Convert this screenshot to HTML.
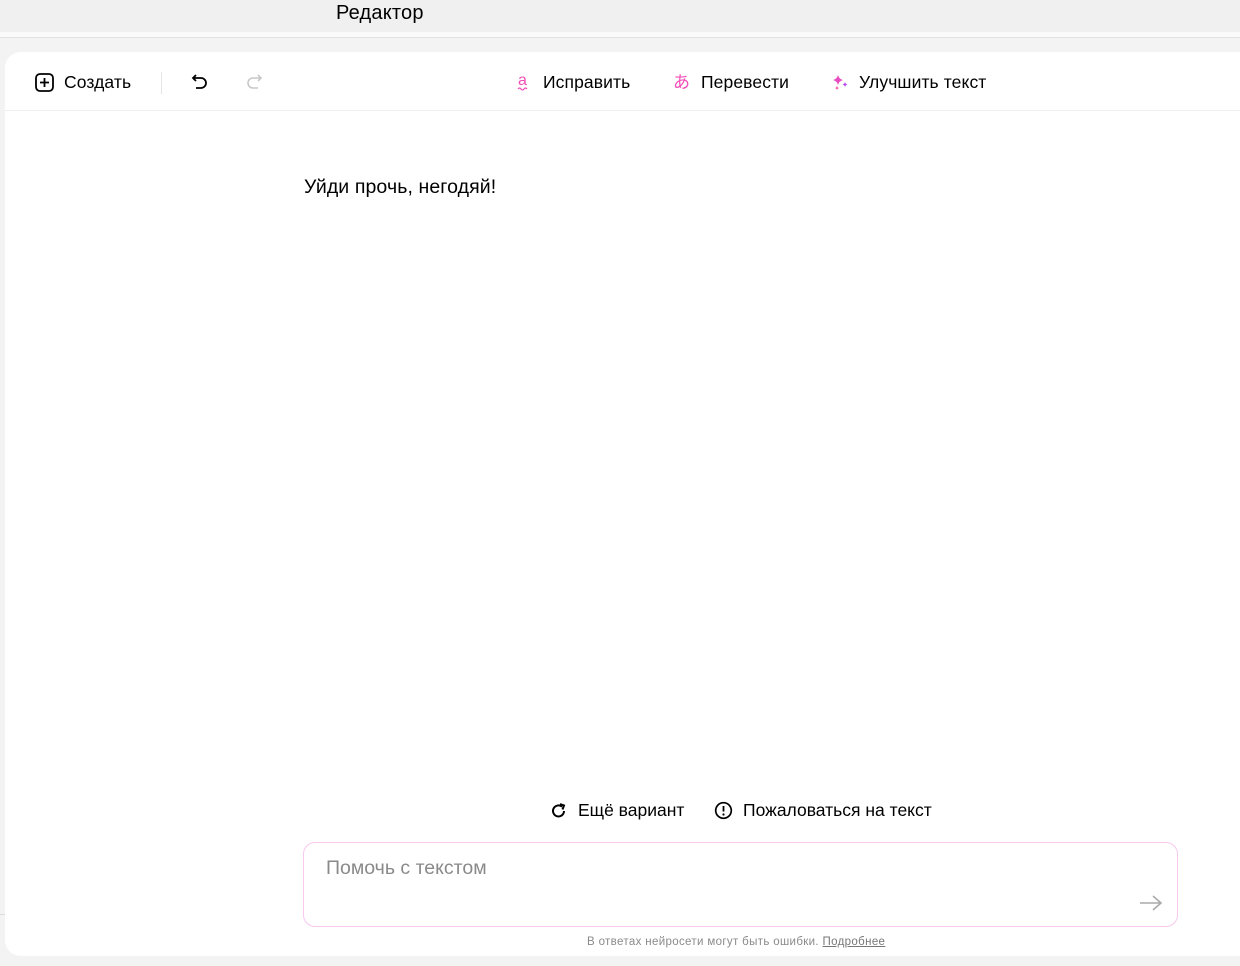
<!DOCTYPE html>
<html><head><meta charset="utf-8"><style>
*{margin:0;padding:0;box-sizing:border-box}
body{width:1240px;height:966px;background:#f3f3f3;font-family:"Liberation Sans","DejaVu Sans",sans-serif;position:relative;overflow:hidden;color:#000}
.top{position:absolute;left:0;top:0;width:1240px;height:32px;background:#f0f0f0}
.gap{position:absolute;left:0;top:32px;width:1240px;height:5px;background:#fafafa}
.top span{position:absolute;left:336px;top:2px;font-size:20px;letter-spacing:0.2px}
.line{position:absolute;left:0;top:37px;width:1240px;height:1px;background:#e2e2e2}
.card{position:absolute;left:5px;top:52px;width:1250px;height:904px;background:#fff;border-radius:16px}
.tb{position:absolute;left:0;top:58px;width:1240px;height:1px;background:#eeeeee}
.it{position:absolute;font-size:17.5px;display:flex;align-items:center;gap:10px;top:18px;height:24px;letter-spacing:0.1px}
.sep{position:absolute;left:156px;top:20px;width:1px;height:22px;background:#e5e5e5}
.txt{position:absolute;left:299px;top:124px;font-size:19.5px;letter-spacing:0.1px}
.bot{position:absolute;top:748px;font-size:17.5px;display:flex;align-items:center;gap:10px}
.inp{position:absolute;left:298px;top:790px;width:875px;height:85px;border:1px solid #f8c8ee;border-radius:12px}
.inp span{position:absolute;left:22px;top:14px;font-size:19.5px;color:#8a8a8a}
.note{position:absolute;left:582px;top:884px;font-size:11.5px;color:#8a8a8a;letter-spacing:0.35px}
.note u{color:#777}
.leftline{position:absolute;left:0;top:914px;width:5px;height:1px;background:#ddd}
</style></head><body>
<div class="top"><span>Редактор</span></div>
<div class="gap"></div>
<div class="line"></div>
<div class="leftline"></div>
<div class="card">
  <div class="it" style="left:30px"><svg width="19" height="19" viewBox="0 0 19 19"><rect x="1" y="1" width="17" height="17" rx="4" fill="none" stroke="#000" stroke-width="1.8"/><path d="M9.5 5v9M5 9.5h9" stroke="#000" stroke-width="1.8"/></svg>Создать</div>
  <div class="sep"></div>
  <div class="it" style="left:186px"><svg width="18" height="18" viewBox="0 0 18 18"><path d="M5 2L2 5l3 3M2 5h8a5 5 0 0 1 0 10H5" fill="none" stroke="#000" stroke-width="1.8"/></svg></div>
  <div class="it" style="left:240px"><svg width="18" height="18" viewBox="0 0 18 18"><path d="M13 2l3 3-3 3M16 5H8a5 5 0 0 0 0 10h5" fill="none" stroke="#c8c8c8" stroke-width="1.6"/></svg></div>
  <div class="it" style="left:510px"><svg width="18" height="20" viewBox="0 0 18 20"><text x="3" y="13" font-size="16" fill="#f24fb8" font-family="Liberation Sans">a</text><path d="M3 17q1.5-2 3 0t3 0 3 0" fill="none" stroke="#f24fb8" stroke-width="1.2"/></svg>Исправить</div>
  <div class="it" style="left:668px"><svg width="18" height="18" viewBox="0 0 18 18"><text x="0" y="15" font-size="17" fill="#f24fb8" font-family="Noto Sans CJK JP">あ</text></svg>Перевести</div>
  <div class="it" style="left:826px"><svg width="18" height="18" viewBox="0 0 18 18"><path d="M7 2q1 4 5 5-4 1-5 5-1-4-5-5 4-1 5-5z" fill="#e94bc0"/><path d="M14 9q.5 2 2.5 2.5-2 .5-2.5 2.5-.5-2-2.5-2.5 2-.5 2.5-2.5z" fill="#b64cf0"/><path d="M6 13q.4 1.5 2 2-1.6.5-2 2-.4-1.5-2-2 1.6-.5 2-2z" fill="#f45ba8"/></svg>Улучшить текст</div>
  <div class="tb"></div>
  <div class="txt">Уйди прочь, негодяй!</div>
  <div class="bot" style="left:545px"><svg width="18" height="18" viewBox="0 0 18 18"><path d="M14 9a5.5 5.5 0 1 1-2-4.3" fill="none" stroke="#000" stroke-width="2"/><path d="M10 2l4 1.5-1.5 4" fill="none" stroke="#000" stroke-width="2"/></svg>Ещё вариант</div>
  <div class="bot" style="left:709px"><svg width="19" height="19" viewBox="0 0 19 19"><circle cx="9.5" cy="9.5" r="7.8" fill="none" stroke="#000" stroke-width="1.7"/><path d="M9.5 5v5.5" stroke="#000" stroke-width="1.8"/><circle cx="9.5" cy="13.5" r="1.1"/></svg>Пожаловаться на текст</div>
  <div class="inp"><span>Помочь с текстом</span><svg style="position:absolute;right:14px;bottom:14px" width="24" height="18" viewBox="0 0 24 18"><path d="M1 9h21M14 2l8 7-8 7" fill="none" stroke="#aaa" stroke-width="1.6"/></svg></div>
  <div class="note">В ответах нейросети могут быть ошибки. <u>Подробнее</u></div>
</div>
</body></html>
